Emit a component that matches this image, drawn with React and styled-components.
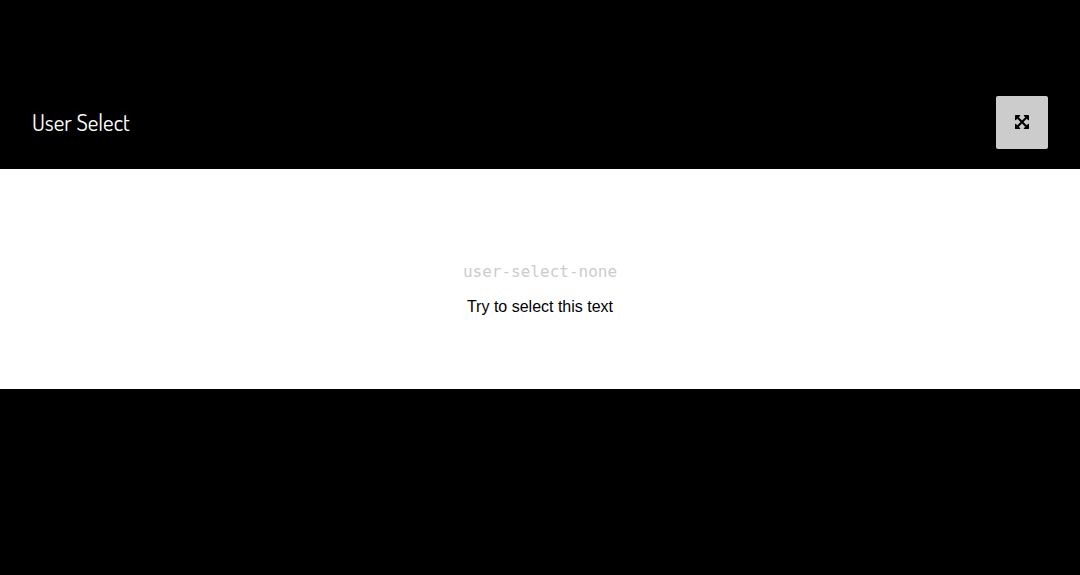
import React from 'react';
import styled, { createGlobalStyle } from 'styled-components';

const GlobalStyle = createGlobalStyle`
  * { box-sizing: border-box; }
  body {
    margin: 0;
    background: #000;
    font-family: "Liberation Sans", Arial, sans-serif;
  }
`;

const Section = styled.section`
  padding-top: 96px;
`;

const Header = styled.header`
  display: flex;
  align-items: center;
  justify-content: space-between;
  padding: 0 32px 20px;
`;

const Title = styled.h2`
  margin: 0;
  padding-bottom: 2px;
  color: #fff;
  font-family: Dosis, "Open Sans", sans-serif;
  font-size: 23px;
  line-height: 24px;
  font-weight: 400;
`;

const ExpandButton = styled.button`
  display: flex;
  align-items: center;
  justify-content: center;
  width: 52px;
  height: 53px;
  padding: 0 0 1px;
  border: 0;
  border-radius: 2px;
  background: #ccc;
  color: #000;
  cursor: pointer;
`;

const Demo = styled.div`
  display: flex;
  flex-direction: column;
  align-items: center;
  gap: 12px;
  padding: 92px 32px 70px;
  background: #fff;
`;

const ClassName = styled.code`
  color: #ccc;
  font-family: "DejaVu Sans Mono", monospace;
  font-size: 16px;
  line-height: 22px;
`;

const Sample = styled.p`
  margin: 0;
  color: #000;
  font-size: 16px;
  line-height: 24px;
  user-select: none;
`;

const ExpandIcon = () => (
  <svg width="14" height="14" viewBox="0 0 1536 1536" fill="currentColor" aria-hidden="true">
    <path d="M1283 413L928 768l355 355 144-144q29-31 70-14 39 17 39 59v448q0 26-19 45t-45 19h-448q-42 0-59-40-17-39 14-69l144-144-355-355-355 355 144 144q31 30 14 69-17 40-59 40H64q-26 0-45-19t-19-45v-448q0-42 40-59 39-17 69 14l144 144 355-355-355-355-144 144q-19 19-45 19-12 0-24-5-40-17-40-59V64q0-26 19-45T64 0h448q42 0 59 40 17 39-14 69L413 253l355 355 355-355-144-144q-31-30-14-69 17-40 59-40h448q26 0 45 19t19 45v448q0 42-39 59-13 5-25 5-26 0-45-19z" />
  </svg>
);

export default function App() {
  return (
    <>
      <GlobalStyle />
      <Section>
        <Header>
          <Title>User Select</Title>
          <ExpandButton type="button" aria-label="Expand">
            <ExpandIcon />
          </ExpandButton>
        </Header>
        <Demo>
          <ClassName>user-select-none</ClassName>
          <Sample>Try to select this text</Sample>
        </Demo>
      </Section>
    </>
  );
}
